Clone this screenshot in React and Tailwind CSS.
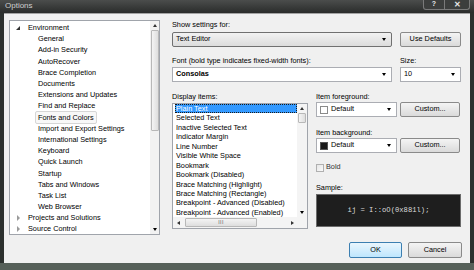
import React from 'react'

const treeItems = [
    { label: 'Environment', root: true, open: true },
    { label: 'General' },
    { label: 'Add-in Security' },
    { label: 'AutoRecover' },
    { label: 'Brace Completion' },
    { label: 'Documents' },
    { label: 'Extensions and Updates' },
    { label: 'Find and Replace' },
    { label: 'Fonts and Colors', focused: true },
    { label: 'Import and Export Settings' },
    { label: 'International Settings' },
    { label: 'Keyboard' },
    { label: 'Quick Launch' },
    { label: 'Startup' },
    { label: 'Tabs and Windows' },
    { label: 'Task List' },
    { label: 'Web Browser' },
    { label: 'Projects and Solutions', root: true },
    { label: 'Source Control', root: true },
]

const displayItems = [
    'Plain Text',
    'Selected Text',
    'Inactive Selected Text',
    'Indicator Margin',
    'Line Number',
    'Visible White Space',
    'Bookmark',
    'Bookmark (Disabled)',
    'Brace Matching (Highlight)',
    'Brace Matching (Rectangle)',
    'Breakpoint - Advanced (Disabled)',
    'Breakpoint - Advanced (Enabled)',
]

const Down = () => (
    <span className="block w-0 h-0 border-x-[2.5px] border-x-transparent border-t-[3px] border-t-black" />
)
const Up = () => (
    <span className="block w-0 h-0 border-x-[2.5px] border-x-transparent border-b-[3px] border-b-[#333]" />
)
const Left = () => (
    <span className="block w-0 h-0 border-y-[2.5px] border-y-transparent border-r-[3px] border-r-[#333]" />
)
const Right = () => (
    <span className="block w-0 h-0 border-y-[2.5px] border-y-transparent border-l-[3px] border-l-[#333]" />
)

const Combo = ({ children, className = '' }) => (
    <div className={`h-[15px] flex items-center justify-between border border-[#abadb3] bg-white pl-[3px] pr-[5px] ${className}`}>
        <div className="flex items-center gap-[3px]">{children}</div>
        <Down />
    </div>
)

const Btn = ({ children, className = '' }) => (
    <div className={`h-[15px] flex items-center justify-center rounded-[2px] border border-[#8a8a8a] bg-linear-to-b from-[#f4f4f4] to-[#dadada] ${className}`}>
        {children}
    </div>
)

const Label = ({ children, className = '' }) => (
    <div className={`h-[9px] leading-[9px] ${className}`}>{children}</div>
)

const App = () => {
    return (
        <div className="w-[474px] h-[270px] flex flex-col bg-[#3a3f3c] font-['Liberation_Sans',Arial,sans-serif] text-[7.3px] text-black overflow-hidden">
            {/* title bar */}
            <div className="h-[13px] flex justify-between bg-linear-to-b from-[#4b4d4c] to-[#2a2c2b]">
                <span className="pl-[5px] pt-[1px] text-[8px] leading-[10px] text-[#cfcfcf]">Options</span>
                <div className="flex h-[10px] pr-[4px]">
                    <div className="w-[22px] flex items-center justify-center border border-[#7a7a7a] border-t-0 rounded-bl-[3px] bg-[#3c3e3d] text-[#e6e6e6] text-[7px] font-bold">?</div>
                    <div className="w-[25px] flex items-center justify-center border border-l-0 border-[#7a7a7a] border-t-0 rounded-br-[3px] bg-[#3c3e3d] text-[#e6e6e6] text-[8px] font-bold">✕</div>
                </div>
            </div>

            <div className="flex-1 flex">
                <div className="w-[4px] bg-[#2c302e]" />

                {/* client area */}
                <div className="flex-1 flex flex-col bg-[#f0f0f0] border-t border-[#a3a3a3] pl-[5px] pr-[8px] pt-[6px]">
                    <div className="h-[215px] flex">
                        {/* tree */}
                        <div className="w-[151px] flex border border-[#a0a4ab] bg-white">
                            <div className="flex-1 pt-[1px] overflow-hidden">
                                {treeItems.map(item => (
                                    <div key={item.label} className="h-[11.2px] flex items-center whitespace-nowrap">
                                        {item.root ? (
                                            <div className="w-[15px] flex justify-center pl-[1px]">
                                                {item.open ? (
                                                    <span className="block w-0 h-0 border-l-[4px] border-l-transparent border-b-[4px] border-b-[#333]" />
                                                ) : (
                                                    <span className="block w-0 h-0 border-y-[3px] border-y-transparent border-l-[3px] border-l-[#9a9a9a]" />
                                                )}
                                            </div>
                                        ) : (
                                            <div className="w-[25px]" />
                                        )}
                                        <span className={`leading-[11px] px-[2px] ${item.focused ? 'border border-[#d6d6d6] rounded-[2px] bg-[#f8f8f8]' : 'border border-transparent'}`}>
                                            {item.label}
                                        </span>
                                    </div>
                                ))}
                            </div>
                            <div className="w-[9px] flex flex-col items-center bg-[#f2f2f2]">
                                <div className="h-[9px] flex items-center"><Up /></div>
                                <div className="w-[8px] h-[101px] border border-[#b8b8b8] rounded-[1px] bg-linear-to-r from-[#f4f4f4] to-[#dedede]" />
                                <div className="flex-1" />
                                <div className="h-[9px] flex items-center"><Down /></div>
                            </div>
                        </div>

                        {/* settings */}
                        <div className="ml-[12px] flex-1 flex flex-col">
                            <Label>Show settings for:</Label>
                            <div className="mt-[3px] flex gap-[8px]">
                                <div className="w-[220px] h-[15px] flex items-center justify-between border border-[#707070] rounded-[2px] bg-linear-to-b from-[#f2f2f2] to-[#dcdcdc] pl-[3px] pr-[5px]">
                                    <span>Text Editor</span>
                                    <Down />
                                </div>
                                <Btn className="w-[61px]">Use Defaults</Btn>
                            </div>

                            <div className="mt-[9px] flex gap-[8px]">
                                <Label className="w-[220px]">Font (bold type indicates fixed-width fonts):</Label>
                                <Label>Size:</Label>
                            </div>
                            <div className="mt-[2px] flex gap-[8px]">
                                <Combo className="w-[220px]"><span className="font-bold">Consolas</span></Combo>
                                <Combo className="w-[61px]"><span>10</span></Combo>
                            </div>

                            <div className="mt-[10px] flex">
                                {/* display items */}
                                <div className="w-[136px] flex flex-col">
                                    <Label>Display items:</Label>
                                    <div className="mt-[2px] h-[126px] flex flex-col border border-[#a0a4ab] bg-white">
                                        <div className="flex-1 flex">
                                            <div className="flex-1 pl-[2px] overflow-hidden">
                                                {displayItems.map((d, i) => (
                                                    <div
                                                        key={d}
                                                        className={`h-[9.45px] leading-[9.45px] pl-[1px] whitespace-nowrap ${i === 0 ? 'bg-[#3399ff] text-white outline outline-dotted outline-[#1a1a1a] -outline-offset-1' : ''}`}
                                                    >
                                                        {d}
                                                    </div>
                                                ))}
                                            </div>
                                            <div className="w-[10px] flex flex-col items-center bg-[#f4f4f4]">
                                                <div className="h-[9px] flex items-center"><Up /></div>
                                                <div className="w-[8px] h-[10px] border border-[#b8b8b8] rounded-[1px] bg-linear-to-r from-[#f4f4f4] to-[#dedede]" />
                                                <div className="flex-1" />
                                                <div className="h-[9px] flex items-center"><Down /></div>
                                            </div>
                                        </div>
                                        <div className="h-[11px] flex items-center bg-[#f4f4f4]">
                                            <div className="w-[10px] flex justify-center"><Left /></div>
                                            <div className="ml-[2px] w-[72px] h-[9px] flex items-center justify-center border border-[#b8b8b8] rounded-[1px] bg-linear-to-b from-[#f4f4f4] to-[#dedede] text-[5px] text-[#555] tracking-[0.5px]">
                                                III
                                            </div>
                                            <div className="flex-1" />
                                            <div className="w-[10px] flex justify-center"><Right /></div>
                                            <div className="w-[10px]" />
                                        </div>
                                    </div>
                                </div>

                                {/* item colors & sample */}
                                <div className="ml-[8px] w-[145px] flex flex-col">
                                    <Label>Item foreground:</Label>
                                    <div className="mt-[1px] flex gap-[3px]">
                                        <Combo className="w-[81px]">
                                            <span className="w-[8px] h-[8px] border border-[#8a8a8a] bg-white" />
                                            <span>Default</span>
                                        </Combo>
                                        <Btn className="w-[60px]">Custom...</Btn>
                                    </div>
                                    <Label className="mt-[11px]">Item background:</Label>
                                    <div className="mt-[1px] flex gap-[3px]">
                                        <Combo className="w-[81px]">
                                            <span className="w-[8px] h-[8px] border border-[#555] bg-[#1a1a1a]" />
                                            <span>Default</span>
                                        </Combo>
                                        <Btn className="w-[60px]">Custom...</Btn>
                                    </div>
                                    <div className="mt-[10px] h-[9px] flex items-center gap-[2px]">
                                        <span className="w-[8px] h-[8px] border border-[#b0b0b0] bg-linear-to-br from-[#e6e6e6] to-[#fafafa]" />
                                        <span className="text-[#333]">Bold</span>
                                    </div>
                                    <Label className="mt-[11px]">Sample:</Label>
                                    <div className="mt-[2px] h-[33px] flex items-center justify-center border border-[#6b6b6b] bg-[#1e1e1e] text-[#dcdcdc] font-['Liberation_Mono',monospace] text-[7.2px]">
                                        ij = I::oO(0x881l);
                                    </div>
                                </div>
                            </div>
                        </div>
                    </div>

                    {/* dialog buttons */}
                    <div className="mt-[7px] flex justify-end gap-[6px]">
                        <div className="w-[53px] h-[16px] flex items-center justify-center rounded-[2px] border border-[#3c7fb1] bg-linear-to-b from-[#eaf6fd] to-[#bee6fd]">OK</div>
                        <div className="w-[54px] h-[16px] flex items-center justify-center rounded-[2px] border border-[#8a8a8a] bg-linear-to-b from-[#f4f4f4] to-[#dadada]">Cancel</div>
                    </div>
                </div>

                <div className="w-[4px] bg-[#2c302e]" />
            </div>
            <div className="h-[7px] bg-[#566059]" />
        </div>
    )
}

export default App
